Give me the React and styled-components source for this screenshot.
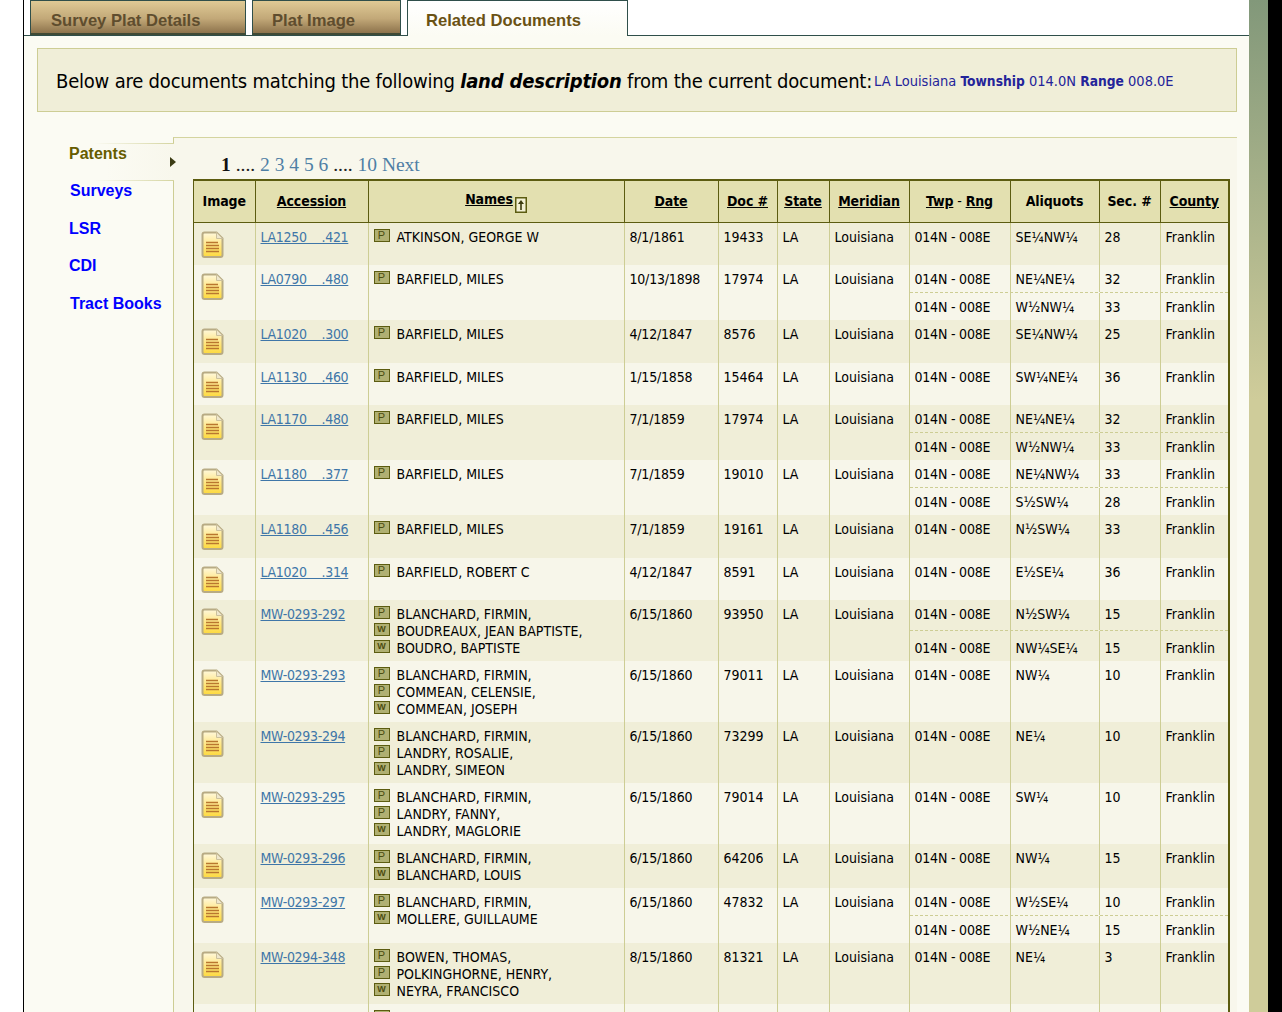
import React from "react";
import styled, { createGlobalStyle } from "styled-components";

const Global = createGlobalStyle`
  html, body { margin: 0; padding: 0; height: 1012px; overflow: hidden; background: #fff; }
  * { box-sizing: border-box; }
`;
const UI = `"DejaVu Sans Condensed", "DejaVu Sans", sans-serif`;
const ARIAL = `"Liberation Sans", Arial, sans-serif`;

const Page = styled.div`
  display: flex; width: 1282px; height: 1012px; overflow: hidden; background: #fff;
`;
const Gutter = styled.div`width: 24px; flex: none; border-right: 1px solid #000;`;
const Main = styled.div`width: 1225px; flex: none; display: flex; flex-direction: column; background: #fbfbf3;`;
const Band = styled.div`width: 19px; flex: none; background: linear-gradient(#82987a 0, #cfcc9a 400px, #cfcc9a 1012px);`;
const Edge = styled.div`flex: 1; background: #000;`;

const TabBar = styled.div`
  height: 36px; flex: none; display: flex; align-items: stretch; gap: 6px; padding-left: 6px;
  background: #fff; border-bottom: 1px solid #2f4f4a;
`;
const Tab = styled.div`
  width: ${p => p.$w}px; height: ${p => p.$active ? 36 : 35}px; padding: 10px 0 0 ${p => p.$pad}px;
  font: bold 16.6px/20px ${ARIAL}; white-space: nowrap;
  border: 1px solid #2f4f4a;
  color: ${p => p.$active ? "#6a5214" : "#5f4d2e"};
  background: ${p => p.$active ? "linear-gradient(#fff, #fbfbf3)" : "linear-gradient(#dfca95, #c2a878 55%, #8d734c)"};
  ${p => p.$active ? "border-bottom: none;" : "border-bottom: 2px solid #3f4a35;"}
`;
const Notice = styled.div`
  margin: 12px 12px 0 13px; height: 64px; flex: none; display: flex; align-items: center; padding: 1px 0 0 18px;
  background: #f0eed8; border: 1px solid #cdcd94; font: 20px ${UI}; letter-spacing: -0.2px; color: #000; white-space: nowrap;
`;
const Emph = styled.b`font-style: italic;`;
const Desc = styled.span`font-size: 14.5px; letter-spacing: 0; color: #24249a; margin-left: 2px;`;
const DescKey = styled.b`font-size: 13.7px;`;
const Body = styled.div`flex: 1; display: flex; padding-top: 25px; min-height: 0;`;
const Side = styled.div`width: 149px; flex: none; padding: 6px 0 0 36px; display: flex; flex-direction: column;`;
const Active = styled.div`
  height: 38px; position: relative; padding: 1px 0 0 9px;
  border-style: solid; border-width: 1px 0;
  border-image: linear-gradient(90deg, #fbfbf3 30%, #d4d49f) 1;
  background: linear-gradient(90deg, #fbfbf3 40%, #f8f7ec);
  margin-right: -1px;
  font: bold 16px ${ARIAL}; color: #665c00;
`;
const Arrow = styled.i`
  position: absolute; right: -2px; top: 13px; width: 0; height: 0;
  border-left: 6px solid #3c3c14; border-top: 5px solid transparent; border-bottom: 5px solid transparent;
`;
const SideLink = styled.div`
  height: 37.5px; padding: 1px 0 0 ${p => p.$x}px; font: bold 16px ${ARIAL}; color: #0000ff; white-space: nowrap;
`;
const Panel = styled.div`
  width: 1064px; flex: none; background: #f8f7ec; border-top: 1px solid #d4d49f; border-left: 1px solid #cdcd94;
  padding: 16px 0 0 19px; overflow: hidden;
`;
const Pager = styled.div`
  height: 25px; padding-left: 28px; font: 19.5px "Liberation Serif", serif; color: #222; white-space: nowrap;
`;
const PageLink = styled.span`color: #4f7fa5;`;
const Current = styled.b`color: #111;`;
const Table = styled.div`
  width: 1037px; border: solid #5c5c10; border-width: 2px 2px 0 1px;
  --cols: 61.5px 113px 256px 94px 59px 52px 80px 101px 89px 61px 1fr;
  font: 14px ${UI}; color: #000;
`;
const HeadRow = styled.div`
  display: grid; grid-template-columns: var(--cols); height: 41.7px; background: #e3e0b0;
  border-bottom: 1px solid #5c5c10;
`;
const Th = styled.div`
  display: flex; align-items: center; justify-content: center; font-weight: bold; white-space: nowrap;
  letter-spacing: -0.1px;
  border-right: 1px solid #5c5c10; padding-bottom: ${p => p.$up ? 5 : 1}px;
  &:last-child { border-right: none; }
`;
const U = styled.span`text-decoration: underline;`;
const Dash = styled.span`font-weight: normal; white-space: pre;`;
const Row = styled.div`
  display: grid; grid-template-columns: var(--cols); background: ${p => p.$alt ? "#f0eed8" : "#f7f6ea"};
`;
const Cell = styled.div`
  padding: 6px 5px 4px; line-height: 17px; border-right: 1px solid #cdcd94; white-space: nowrap;
  letter-spacing: ${p => p.$tight ? "-0.2px" : "0"};
`;
const ImgCell = styled(Cell)`padding: 8px 0 7.5px 7px; line-height: 0;`;
const Link = styled.a`color: #3f76a8; text-decoration: underline; white-space: pre; letter-spacing: -0.3px;`;
const NameLine = styled.div`display: flex; align-items: center; height: 17px;`;
const Badge = styled.span`
  width: 16px; height: 13px; flex: none; margin-right: 7px; position: relative; top: -2px;
  display: flex; align-items: center; justify-content: center;
  background: #b0b072; border: 1px solid #5c5c10; color: #4c4c10;
  font: ${p => p.$w ? "bold 9px" : "11px"} ${ARIAL}; line-height: 1;
`;
const Land = styled.div`display: grid; grid-column: 8 / 12; grid-template-columns: subgrid;`;
const Line = styled.div`
  grid-column: 1 / -1; display: grid; grid-template-columns: subgrid;
  align-items: stretch;
  ${p => p.$split ? "border-bottom: 1px dashed #cdcd94;" : ""}
`;
const LandCell = styled.div`
  display: flex; line-height: 17px; height: 100%;
  padding: ${p => p.$first ? "6px 5px 3.5px" : "6.5px 5px 4px"};
  align-items: ${p => p.$first ? "flex-start" : "flex-end"};
  border-right: 1px solid #cdcd94; white-space: nowrap;
  letter-spacing: ${p => p.$tight ? "-0.2px" : "0"};
  &:last-child { border-right: none; }
`;

const DocIcon = ({ id }) => (
  <svg width="23" height="27" viewBox="0 0 23 27" aria-hidden="true" style={{ display: "block" }}>
    <defs>
      <linearGradient id={id} x1="0" y1="0" x2="0" y2="1">
        <stop offset="0" stopColor="#fff8dc" />
        <stop offset="0.55" stopColor="#ffe680" />
        <stop offset="1" stopColor="#fdd93c" />
      </linearGradient>
    </defs>
    <path d="M3.5 1.5h12l6 6v16.5q0 2-2 2h-16q-2 0-2-2V3.5q0-2 2-2z" fill={`url(#${id})`} stroke="#b8ab84" strokeWidth="2" />
    <path d="M15.5 1.5v6h6z" fill="#efe7cd" stroke="#cbc09c" strokeWidth="1" />
    <path d="M5 11.5h12M5 14.5h13M5 17.5h13M5 20.5h13" stroke="#b9772f" strokeWidth="1.6" />
  </svg>
);
const SortIcon = () => (
  <svg width="12" height="16" viewBox="0 0 12 16" style={{ marginLeft: 2, marginTop: 12 }} aria-hidden="true">
    <rect x="0.75" y="0.75" width="10.5" height="14.5" fill="#f2f0d4" stroke="#5c5c10" strokeWidth="1.5" />
    <path d="M6 3L3 7h2.2v6h1.6V7H9z" fill="#3c3c10" />
  </svg>
);

const B = (t, n) => ({ t, n });
const T = "014N - 008E";
const rows = [
  ["LA1250\u00a0\u00a0\u00a0\u00a0.421", [B("P", "ATKINSON, GEORGE W")], "8/1/1861", "19433", [["SE¼NW¼", "28"]]],
  ["LA0790\u00a0\u00a0\u00a0\u00a0.480", [B("P", "BARFIELD, MILES")], "10/13/1898", "17974", [["NE¼NE¼", "32"], ["W½NW¼", "33"]]],
  ["LA1020\u00a0\u00a0\u00a0\u00a0.300", [B("P", "BARFIELD, MILES")], "4/12/1847", "8576", [["SE¼NW¼", "25"]]],
  ["LA1130\u00a0\u00a0\u00a0\u00a0.460", [B("P", "BARFIELD, MILES")], "1/15/1858", "15464", [["SW¼NE¼", "36"]]],
  ["LA1170\u00a0\u00a0\u00a0\u00a0.480", [B("P", "BARFIELD, MILES")], "7/1/1859", "17974", [["NE¼NE¼", "32"], ["W½NW¼", "33"]]],
  ["LA1180\u00a0\u00a0\u00a0\u00a0.377", [B("P", "BARFIELD, MILES")], "7/1/1859", "19010", [["NE¼NW¼", "33"], ["S½SW¼", "28"]]],
  ["LA1180\u00a0\u00a0\u00a0\u00a0.456", [B("P", "BARFIELD, MILES")], "7/1/1859", "19161", [["N½SW¼", "33"]]],
  ["LA1020\u00a0\u00a0\u00a0\u00a0.314", [B("P", "BARFIELD, ROBERT C")], "4/12/1847", "8591", [["E½SE¼", "36"]]],
  ["MW-0293-292", [B("P", "BLANCHARD, FIRMIN,"), B("W", "BOUDREAUX, JEAN BAPTISTE,"), B("W", "BOUDRO, BAPTISTE")], "6/15/1860", "93950", [["N½SW¼", "15"], ["NW¼SE¼", "15"]]],
  ["MW-0293-293", [B("P", "BLANCHARD, FIRMIN,"), B("P", "COMMEAN, CELENSIE,"), B("W", "COMMEAN, JOSEPH")], "6/15/1860", "79011", [["NW¼", "10"]]],
  ["MW-0293-294", [B("P", "BLANCHARD, FIRMIN,"), B("P", "LANDRY, ROSALIE,"), B("W", "LANDRY, SIMEON")], "6/15/1860", "73299", [["NE¼", "10"]]],
  ["MW-0293-295", [B("P", "BLANCHARD, FIRMIN,"), B("P", "LANDRY, FANNY,"), B("W", "LANDRY, MAGLORIE")], "6/15/1860", "79014", [["SW¼", "10"]]],
  ["MW-0293-296", [B("P", "BLANCHARD, FIRMIN,"), B("W", "BLANCHARD, LOUIS")], "6/15/1860", "64206", [["NW¼", "15"]]],
  ["MW-0293-297", [B("P", "BLANCHARD, FIRMIN,"), B("W", "MOLLERE, GUILLAUME")], "6/15/1860", "47832", [["W½SE¼", "10"], ["W½NE¼", "15"]]],
  ["MW-0294-348", [B("P", "BOWEN, THOMAS,"), B("P", "POLKINGHORNE, HENRY,"), B("W", "NEYRA, FRANCISCO")], "8/15/1860", "81321", [["NE¼", "3"]]],
  ["", [B("", "")], "", "", [["", ""]]],
];

export default function App() {
  return (
    <Page>
      <Global />
      <Gutter />
      <Main>
        <TabBar>
          <Tab $w={216} $pad={20}>Survey Plat Details</Tab>
          <Tab $w={149} $pad={19}>Plat Image</Tab>
          <Tab $w={221} $pad={18} $active>Related Documents</Tab>
        </TabBar>
        <Notice>
          Below are documents matching the following&nbsp;<Emph>land description</Emph>&nbsp;from the current document:
          <Desc>LA Louisiana <DescKey>Township</DescKey> 014.0N <DescKey>Range</DescKey> 008.0E</Desc>
        </Notice>
        <Body>
          <Side>
            <Active>Patents<Arrow /></Active>
            <SideLink $x={10}>Surveys</SideLink>
            <SideLink $x={9}>LSR</SideLink>
            <SideLink $x={9}>CDI</SideLink>
            <SideLink $x={10}>Tract Books</SideLink>
          </Side>
          <Panel>
            <Pager>
              <Current>1</Current> .... <PageLink>2 3 4 5 6</PageLink> .... <PageLink>10 Next</PageLink>
            </Pager>
            <Table>
              <HeadRow>
                <Th>Image</Th>
                <Th><U>Accession</U></Th>
                <Th $up><U>Names</U><SortIcon /></Th>
                <Th><U>Date</U></Th>
                <Th><U>Doc #</U></Th>
                <Th><U>State</U></Th>
                <Th><U>Meridian</U></Th>
                <Th><U>Twp</U><Dash> - </Dash><U>Rng</U></Th>
                <Th>Aliquots</Th>
                <Th>Sec. #</Th>
                <Th><U>County</U></Th>
              </HeadRow>
              {rows.map((r, i) => (
                <Row key={i} $alt={i % 2 === 0}>
                  <ImgCell><DocIcon id={`doc${i}`} /></ImgCell>
                  <Cell><Link>{r[0]}</Link></Cell>
                  <Cell>
                    {r[1].map((n, j) => (
                      <NameLine key={j}><Badge $w={n.t === "W"}>{n.t}</Badge>{n.n}</NameLine>
                    ))}
                  </Cell>
                  <Cell $tight>{r[2]}</Cell>
                  <Cell>{r[3]}</Cell>
                  <Cell>{r[3] && "LA"}</Cell>
                  <Cell>{r[3] && "Louisiana"}</Cell>
                  <Land>
                    {r[4].map((l, j) => (
                      <Line key={j} $split={j === 0 && r[4].length > 1}>
                        <LandCell $first={j === 0} $tight>{r[3] && T}</LandCell>
                        <LandCell $first={j === 0}>{l[0]}</LandCell>
                        <LandCell $first={j === 0}>{l[1]}</LandCell>
                        <LandCell $first={j === 0}>{r[3] && "Franklin"}</LandCell>
                      </Line>
                    ))}
                  </Land>
                </Row>
              ))}
            </Table>
          </Panel>
        </Body>
      </Main>
      <Band />
      <Edge />
    </Page>
  );
}
